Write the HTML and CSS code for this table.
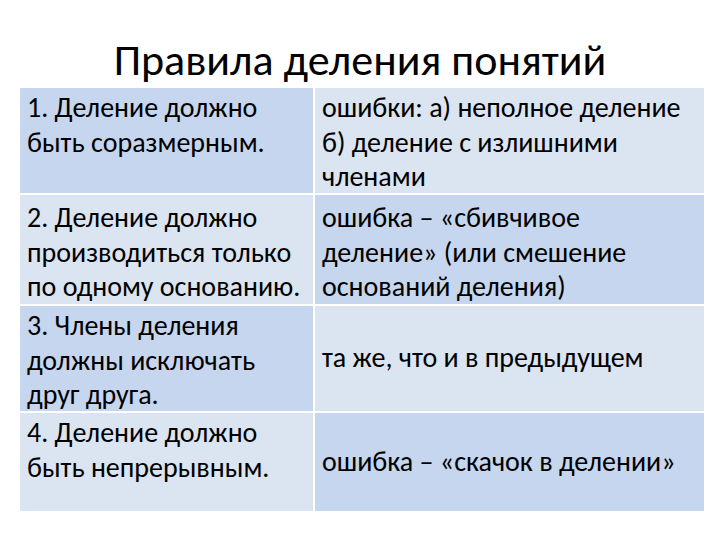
FILE: index.html
```html
<!DOCTYPE html>
<html lang="ru">
<head>
<meta charset="utf-8">
<title>Правила деления понятий</title>
<link rel="stylesheet" href="styles.css">
</head>
<body>
<div class="slide">
  <h1 class="title">Правила деления понятий</h1>
  <div class="table">
    <div class="cell dark">1. Деление должно<br>быть соразмерным.</div>
    <div class="cell light">ошибки: а) неполное деление<br>б) деление с излишними<br>членами</div>
    <div class="cell light lower">2. Деление должно<br>производиться только<br>по одному основанию.</div>
    <div class="cell dark lower">ошибка – «сбивчивое<br>деление» (или смешение<br>оснований деления)</div>
    <div class="cell dark">3. Члены деления<br>должны исключать<br>друг друга.</div>
    <div class="cell light mid">та же, что и в предыдущем</div>
    <div class="cell light">4. Деление должно<br>быть непрерывным.</div>
    <div class="cell dark mid">ошибка – «скачок в делении»</div>
  </div>
</div>
</body>
</html>
```
FILE: styles.css
```css
html, body {
  margin: 0;
  padding: 0;
  background: #ffffff;
}
.slide {
  width: 720px;
  height: 540px;
  padding-top: 33px;
  box-sizing: border-box;
  font-family: "Carlito", "Liberation Sans", sans-serif;
  color: #000000;
}
.title {
  margin: 0;
  font-weight: normal;
  font-size: 44px;
  line-height: 54px;
  text-align: center;
  color: #000000;
}
.table {
  margin: 1px 16px 0 20px;
  display: grid;
  grid-template-columns: 293px 389px;
  grid-template-rows: 105px 109px 105px 98px;
  column-gap: 2px;
  row-gap: 2px;
}
.cell {
  padding: 3px 7px 0;
  font-size: 28px;
  line-height: 34.5px;
  white-space: nowrap;
  box-sizing: border-box;
}
.lower {
  padding-top: 6px;
}
.dark {
  background: #c6d6ee;
}
.light {
  background: #dbe4f1;
}
.mid {
  display: flex;
  align-items: center;
  padding-top: 0;
  padding-bottom: 0;
}
```
